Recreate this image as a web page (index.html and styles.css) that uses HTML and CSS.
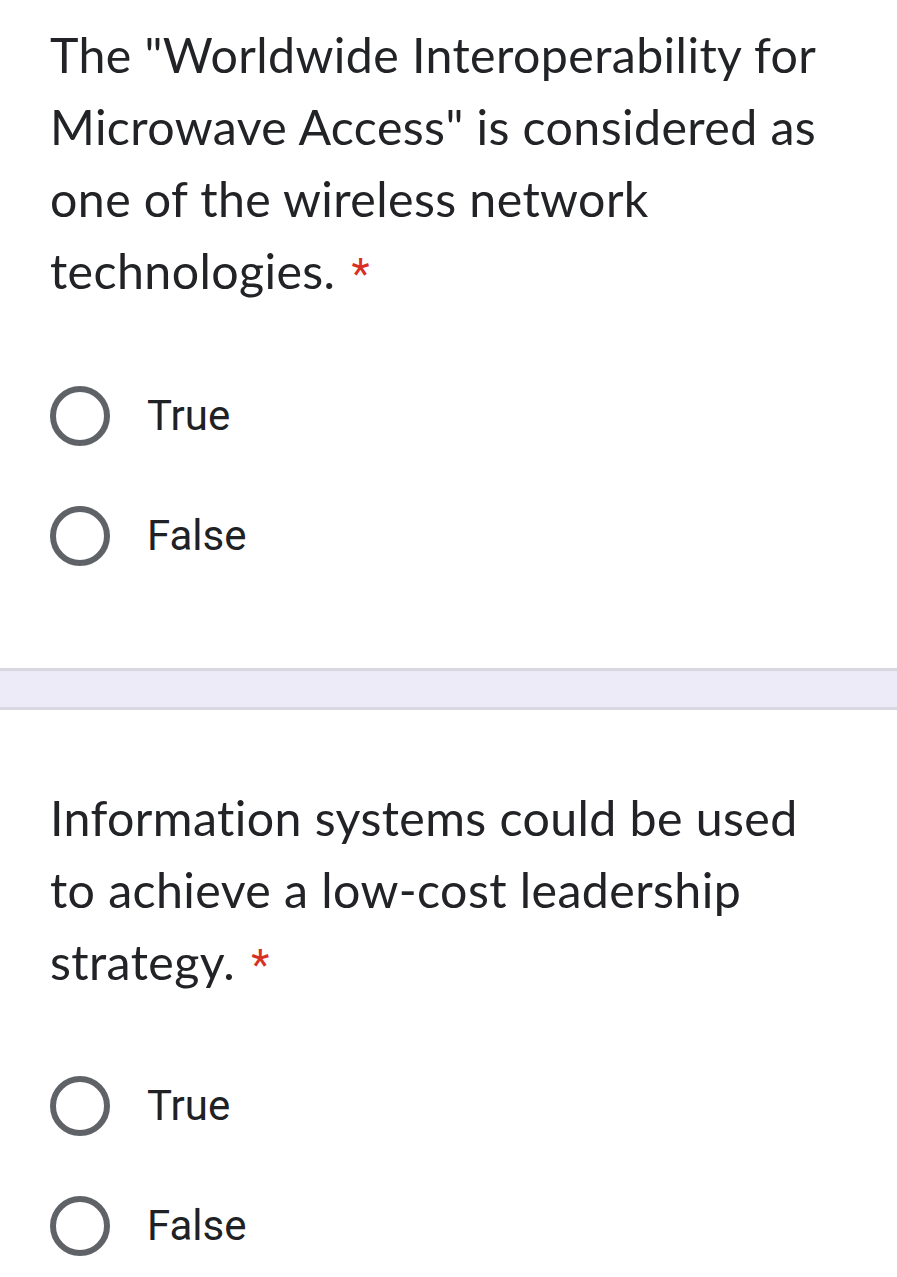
FILE: index.html
```html
<!DOCTYPE html>
<html>
<head>
<meta charset="utf-8">
<link rel="stylesheet" href="styles.css">
</head>
<body>
<section class="question">
  <div class="title"><span class="text">The "Worldwide Interoperability for Microwave Access" is considered as one of the wireless network technologies.</span><span class="req">*</span></div>
  <div class="options">
    <label class="option"><span class="radio"></span><span class="label">True</span></label>
    <label class="option"><span class="radio"></span><span class="label">False</span></label>
  </div>
</section>
<div class="divider"></div>
<section class="question second">
  <div class="title"><span class="text">Information systems could be used to achieve a low-cost leadership strategy.</span><span class="req">*</span></div>
  <div class="options">
    <label class="option"><span class="radio"></span><span class="label">True</span></label>
    <label class="option"><span class="radio"></span><span class="label">False</span></label>
  </div>
</section>
</body>
</html>
```
FILE: styles.css
```css
html, body {
  margin: 0;
  padding: 0;
  background: #ffffff;
}
body {
  width: 897px;
  height: 1277px;
  overflow: hidden;
  font-family: Roboto, "Liberation Sans", sans-serif;
  color: #202124;
}
.question {
  padding: 18px 57px 102px 50px;
}
.question.second {
  padding-top: 71px;
  padding-bottom: 0;
}
.title {
  font-family: Lato, Roboto, sans-serif;
  font-size: 48.3px;
  letter-spacing: 0.4px;
  line-height: 72px;
  font-variant-ligatures: none;
  color: #222326;
}
.req {
  font-family: Roboto, sans-serif;
  color: #d93025;
  font-size: 42px;
  letter-spacing: 0;
  line-height: 1;
  margin-left: 16px;
  position: relative;
  top: -1px;
}
.options {
  margin-top: 80px;
  display: flex;
  flex-direction: column;
  gap: 60px;
}
.second .options {
  margin-top: 79px;
}
.option {
  display: flex;
  align-items: center;
  height: 60px;
}
.radio {
  box-sizing: border-box;
  width: 60px;
  height: 60px;
  border: 6px solid #5f6368;
  border-radius: 50%;
  flex: none;
}
.label {
  margin-left: 37px;
  font-size: 42px;
  line-height: 60px;
}
.divider {
  height: 36px;
  background: #eeebf8;
  border-top: 3px solid #d9d8e0;
  border-bottom: 3px solid #d9d8e0;
}
```
